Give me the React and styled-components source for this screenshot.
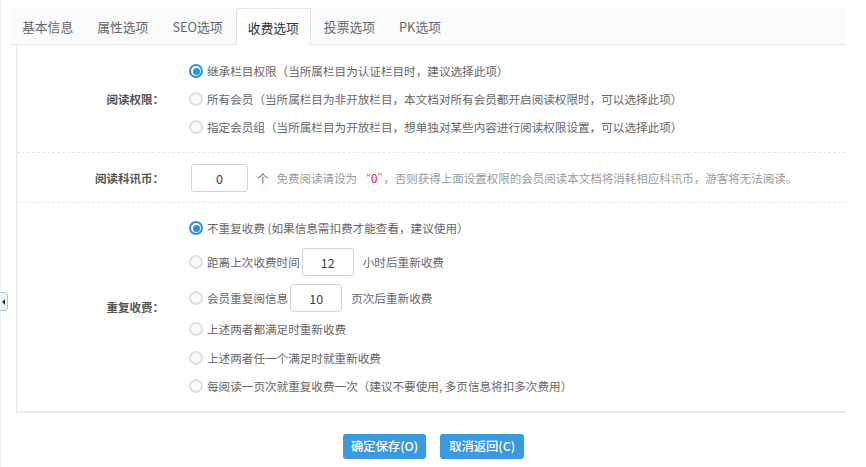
import React from "react";
import styled, { createGlobalStyle } from "styled-components";

const Global = createGlobalStyle`
  html, body { margin: 0; padding: 0; background: #fff; }
  body { font-family: "Noto Sans CJK SC", "Noto Sans", sans-serif; color: #666; }
  * { box-sizing: border-box; }
`;

const Page = styled.div`
  position: relative;
  width: 866px;
  height: 467px;
  padding: 8px 20px 0 10px;
  border-left: 1px solid #f0f0f0;
`;

const TabBar = styled.div`
  display: flex;
  height: 37px;
  background: #fafbfd;
  border-bottom: 1px solid #e6e6e6;
`;

const Tab = styled.div`
  height: ${(p) => (p.$active ? "37px" : "36px")};
  padding: 0 11px;
  margin-right: 2px;
  display: flex;
  align-items: center;
  font-size: 12.8px;
  color: ${(p) => (p.$active ? "#333" : "#666")};
  background: ${(p) => (p.$active ? "#fff" : "transparent")};
  border: ${(p) => (p.$active ? "1px solid #e3e3e3" : "none")};
  border-bottom: none;
  border-radius: 2px 2px 0 0;
  margin-bottom: ${(p) => (p.$active ? "-1px" : "0")};
  white-space: nowrap;
`;

const Panel = styled.div`
  margin-left: 5px;
  border-left: 1px solid #e8e8e8;
  border-bottom: 2px solid #e9e9e9;
`;

const Block = styled.div`
  display: flex;
  padding: ${(p) => p.$pad};
  border-bottom: ${(p) => (p.$last ? "none" : "1px dashed #e6e6e6")};
`;

const Label = styled.div`
  width: 172px;
  flex: none;
  padding-right: 25px;
  display: flex;
  align-items: center;
  justify-content: flex-end;
  font-size: 11.5px;
  font-weight: bold;
  color: #555;
`;

const Options = styled.div`
  display: flex;
  flex-direction: column;
`;

const Option = styled.div`
  height: ${(p) => p.$h || 28}px;
  display: flex;
  align-items: center;
  font-size: 11.6px;
  color: #666;
  white-space: nowrap;
`;

const Radio = styled.span`
  width: 14px;
  height: 14px;
  flex: none;
  border-radius: 50%;
  margin-right: 4px;
  position: relative;
  background: ${(p) => (p.$checked ? "#2e8ee6" : "#fafafa")};
  border: ${(p) => (p.$checked ? "none" : "2px solid #dcdfe3")};
  &::before {
    content: "";
    display: ${(p) => (p.$checked ? "block" : "none")};
    position: absolute;
    left: 2px;
    top: 2px;
    width: 10px;
    height: 10px;
    border-radius: 50%;
    background: #fff;
  }
  &::after {
    content: "";
    display: ${(p) => (p.$checked ? "block" : "none")};
    position: absolute;
    left: 3.5px;
    top: 3.5px;
    width: 7px;
    height: 7px;
    border-radius: 50%;
    background: #2e8ee6;
  }
`;

const Input = styled.div`
  width: ${(p) => p.$w}px;
  height: 28px;
  border: 1px solid #d4d4d4;
  border-radius: 3px;
  display: flex;
  align-items: center;
  justify-content: center;
  font-size: 12.5px;
  color: #444;
  margin: 0 ${(p) => p.$mr || 0}px 0 ${(p) => p.$ml || 0}px;
  background: #fff;
`;

const CoinRow = styled.div`
  display: flex;
  align-items: center;
  height: 28px;
  font-size: 11.5px;
  white-space: nowrap;
`;

const Dark = styled.span`
  color: #666;
  margin-right: 8px;
`;

const Hint = styled.span`
  color: #999;
`;

const Red = styled.span`
  color: #f00;
`;

const Buttons = styled.div`
  display: flex;
  justify-content: center;
  gap: 14px;
  margin-top: 21px;
  padding-left: 10px;
`;

const Button = styled.button`
  height: 25px;
  padding: 0 ${(p) => p.$px || 8}px;
  border: none;
  border-radius: 3px;
  background: #3a9ae0;
  color: #fff;
  font-family: "Noto Sans CJK SC", "Noto Sans", sans-serif;
  font-size: 12.3px;
  font-weight: 500;
  line-height: 25px;
  cursor: pointer;
`;

const Toggle = styled.div`
  position: absolute;
  left: -1px;
  top: 292px;
  width: 8px;
  height: 19px;
  background: #eef5fd;
  border: 1px solid #a9c8ec;
  border-left: none;
  border-radius: 0 4px 4px 0;
  display: flex;
  align-items: center;
  justify-content: center;
  &::after {
    content: "";
    width: 0;
    height: 0;
    border-top: 3px solid transparent;
    border-bottom: 3px solid transparent;
    border-right: 3px solid #333;
  }
`;

const tabs = ["基本信息", "属性选项", "SEO选项", "收费选项", "投票选项", "PK选项"];

export default function App() {
  return (
    <>
      <Global />
      <Page>
        <TabBar>
          {tabs.map((t) => (
            <Tab key={t} $active={t === "收费选项"}>{t}</Tab>
          ))}
        </TabBar>
        <Panel>
          <Block $pad="12px 0 11px">
            <Label>阅读权限：</Label>
            <Options>
              <Option><Radio $checked />继承栏目权限（当所属栏目为认证栏目时，建议选择此项）</Option>
              <Option><Radio />所有会员（当所属栏目为非开放栏目，本文档对所有会员都开启阅读权限时，可以选择此项）</Option>
              <Option><Radio />指定会员组（当所属栏目为开放栏目，想单独对某些内容进行阅读权限设置，可以选择此项）</Option>
            </Options>
          </Block>
          <Block $pad="11px 0 10px">
            <Label>阅读科讯币：</Label>
            <CoinRow>
              <Input $w={57} $ml={2} $mr={9}>0</Input>
              <Dark>个</Dark>
              <Hint>免费阅读请设为 “<Red>0</Red>”，否则获得上面设置权限的会员阅读本文档将消耗相应科讯币，游客将无法阅读。</Hint>
            </CoinRow>
          </Block>
          <Block $pad="11px 0 11px" $last>
            <Label>重复收费：</Label>
            <Options>
              <Option $h={28}><Radio $checked />不重复收费 (如果信息需扣费才能查看，建议使用）</Option>
              <Option $h={40}><Radio />距离上次收费时间<Input $w={52} $ml={2} $mr={9}>12</Input>小时后重新收费</Option>
              <Option $h={32}><Radio />会员重复阅信息<Input $w={52} $ml={2} $mr={9}>10</Input>页次后重新收费</Option>
              <Option $h={30}><Radio />上述两者都满足时重新收费</Option>
              <Option $h={28}><Radio />上述两者任一个满足时就重新收费</Option>
              <Option $h={28}><Radio />每阅读一页次就重复收费一次（建议不要使用, 多页信息将扣多次费用）</Option>
            </Options>
          </Block>
        </Panel>
        <Buttons>
          <Button>确定保存(O)</Button>
          <Button $px={9}>取消返回(C)</Button>
        </Buttons>
        <Toggle />
      </Page>
    </>
  );
}
